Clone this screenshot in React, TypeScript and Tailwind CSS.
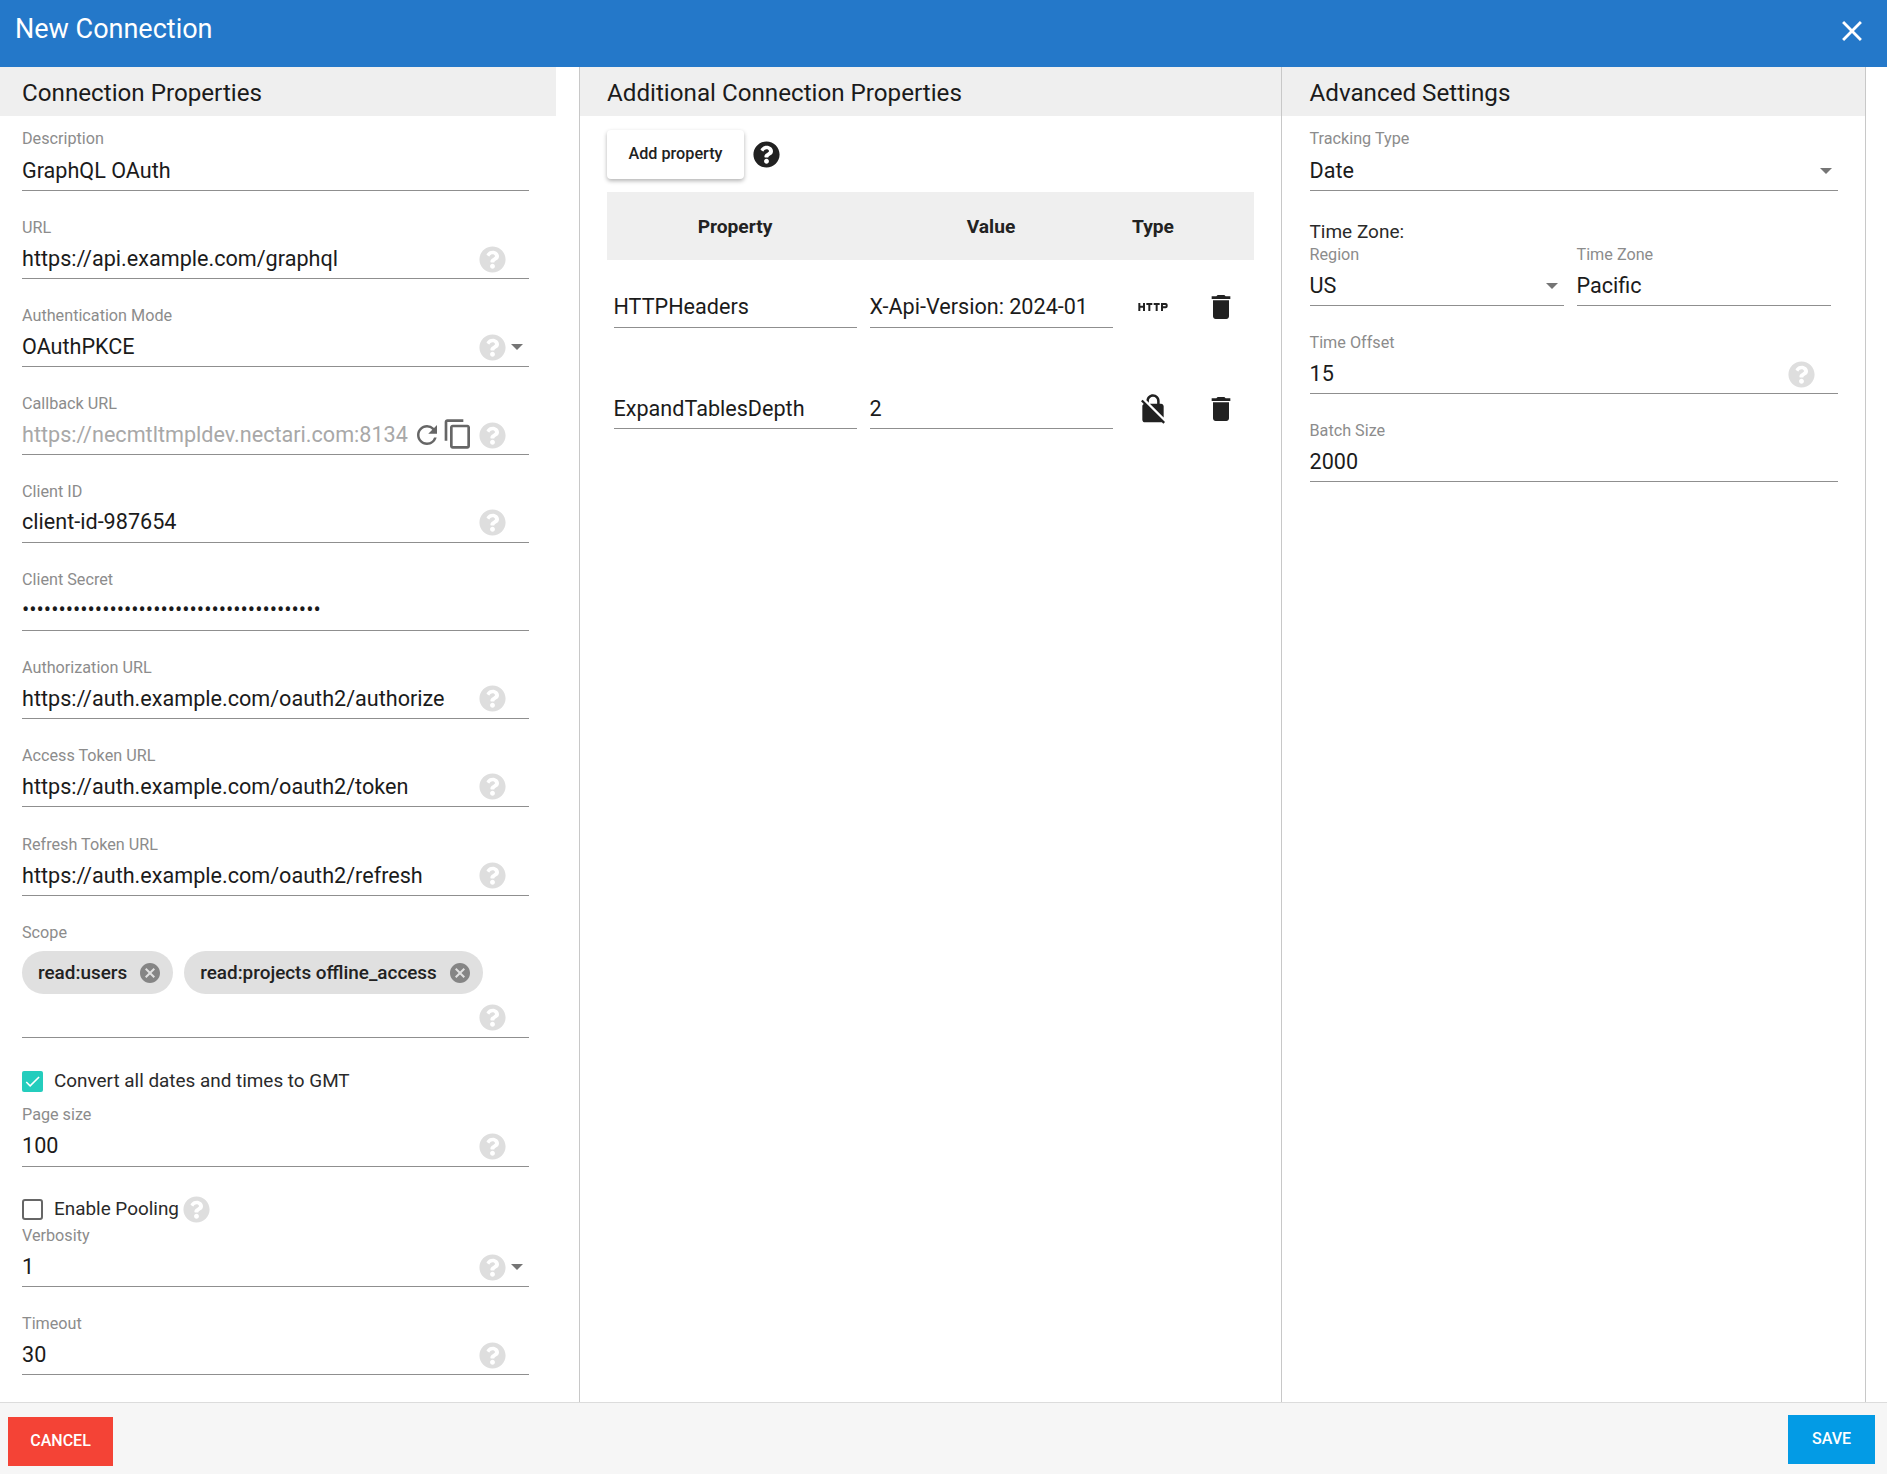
import React from "react";
import { FaQuestionCircle } from "react-icons/fa";
import {
  MdCancel,
  MdCheck,
  MdClose,
  MdContentCopy,
  MdDelete,
  MdHttp,
  MdNoEncryption,
  MdRefresh,
} from "react-icons/md";

function Help({ className = "text-[#dedede]" }: { className?: string }) {
  return <FaQuestionCircle size={27} className={`shrink-0 ${className}`} />;
}

function Caret({ className = "" }: { className?: string }) {
  return (
    <svg width="12" height="6" viewBox="0 0 12 6" className={`shrink-0 ${className}`}>
      <path d="M0 0h12L6 6z" fill="#757575" />
    </svg>
  );
}

function PanelTitle({ children }: { children: React.ReactNode }) {
  return (
    <div className="h-[49px] pt-[3px] bg-[#efefef] flex items-center text-[24.2px] text-[#1b1b1b]">
      {children}
    </div>
  );
}

// label on top, value on an underlined row
function Field({
  label,
  value,
  help,
  caret,
  tight,
  className = "",
  valueClass = "text-[#1b1b1b]",
  children,
}: {
  label: string;
  value?: string;
  help?: boolean;
  caret?: boolean;
  tight?: boolean;
  className?: string;
  valueClass?: string;
  children?: React.ReactNode;
}) {
  return (
    <div className={`h-[64px] flex flex-col ${className}`}>
      <div className={`h-[22px] text-[16.2px] text-[#8c8c8c] ${tight ? "leading-[24px]" : "leading-[26px]"}`}>
        {label}
      </div>
      <div className="h-[42px] pt-[3px] flex items-center border-b border-[#8f8f8f] relative">
        <span className={`flex-1 truncate text-[21.6px] ${valueClass}`}>{value}</span>
        {children}
        {help && (
          <span className={caret ? "ml-0" : "mr-[23px]"}>
            <Help />
          </span>
        )}
        {caret && <Caret className={help ? "ml-[5px] mr-[6px]" : "mr-[6px]"} />}
      </div>
    </div>
  );
}

function Chip({ text }: { text: string }) {
  return (
    <div className="h-[43px] rounded-full bg-[#e0e0e0] flex items-center pl-4 pr-[11px] gap-[11px]">
      <span className="text-[18.9px] font-medium text-[#222] pt-[1px]">{text}</span>
      <MdCancel size={24} className="text-[#858585]" />
    </div>
  );
}

function Check({ checked, label }: { checked?: boolean; label: string }) {
  return (
    <>
      {checked ? (
        <span className="w-[21px] h-[21px] rounded-[2px] bg-[#24cdbd] flex items-center justify-center">
          <MdCheck size={19} className="text-white" />
        </span>
      ) : (
        <span className="w-[21px] h-[21px] rounded-[3px] border-2 border-[#666] bg-white" />
      )}
      <span className="ml-[11px] text-[18.9px] text-[#2a2a2a]">{label}</span>
    </>
  );
}

function PropRow({
  name,
  value,
  icon,
  low,
  className,
}: {
  name: string;
  value: string;
  icon: React.ReactNode;
  low?: boolean;
  className: string;
}) {
  const cell = `h-[42px] flex items-center border-b border-[#8f8f8f] text-[21.6px] text-[#1b1b1b] ${
    low ? "pt-[3px]" : "pt-[1px]"
  }`;
  const iconCell = `flex items-center justify-center ${low ? "pt-[2px]" : ""}`;
  return (
    <div className={`grid grid-cols-[256px_256px_68px_67px] h-[42px] ${className}`}>
      <div className="px-[6.5px]">
        <div className={cell}>{name}</div>
      </div>
      <div className="px-[6.5px]">
        <div className={cell}>{value}</div>
      </div>
      <div className={iconCell}>{icon}</div>
      <div className={iconCell}>
        <MdDelete size={32} className="text-[#212121]" />
      </div>
    </div>
  );
}

export default function App() {
  return (
    <div className="w-[1887px] h-[1474px] flex flex-col bg-white overflow-hidden font-['Roboto',sans-serif]">
      <header className="h-[67px] shrink-0 bg-[#2478c9] flex items-start justify-between pl-[15px] pr-[18px] text-white">
        <div className="text-[27px] leading-[58px]">New Connection</div>
        <MdClose size={34} className="mt-[14px]" />
      </header>

      <div className="flex-1 flex min-h-0">
        {/* Connection Properties */}
        <section className="w-[580px] shrink-0 border-r border-[#c8c8c8]">
          <div className="w-[556px]">
            <PanelTitle>
              <span className="pl-[22px]">Connection Properties</span>
            </PanelTitle>
          </div>
          <div className="pl-[22px] w-[529px] pt-[11px]">
            <Field tight label="Description" value="GraphQL OAuth" />
            <Field className="mt-[24px]" label="URL" value="https://api.example.com/graphql" help />
            <Field className="mt-[24px]" label="Authentication Mode" value="OAuthPKCE" help caret />
            <Field
              className="mt-[24px]"
              label="Callback URL"
              value="https://necmtltmpldev.nectari.com:8134"
              valueClass="text-[#a8a8a8]"
              help
            >
              <MdRefresh size={30} className="text-[#666] shrink-0" />
              <MdContentCopy size={32} className="text-[#666] shrink-0 mr-[5px] mb-[2px]" />
            </Field>
            <Field className="mt-[23.5px]" label="Client ID" value="client-id-987654" help />
            <Field className="mt-[24px]" label="Client Secret" value={"•".repeat(41)} />
            <Field
              className="mt-[24px]"
              label="Authorization URL"
              value="https://auth.example.com/oauth2/authorize"
              valueClass="text-[#1b1b1b] pt-[2px]"
              help
            />
            <Field
              className="mt-[24px]"
              label="Access Token URL"
              value="https://auth.example.com/oauth2/token"
              valueClass="text-[#1b1b1b] pt-[2px]"
              help
            />
            <Field
              className="mt-[25px]"
              label="Refresh Token URL"
              value="https://auth.example.com/oauth2/refresh"
              valueClass="text-[#1b1b1b] pt-[2px]"
              help
            />
            <div className="mt-[25.5px] h-[117px] border-b border-[#8f8f8f]">
              <div className="h-[22px] leading-[24px] text-[16.2px] text-[#8c8c8c]">Scope</div>
              <div className="mt-2 flex gap-[11px]">
                <Chip text="read:users" />
                <Chip text="read:projects offline_access" />
              </div>
              <div className="mt-[10px] flex justify-end pr-[23px]">
                <Help />
              </div>
            </div>
            <div className="mt-[33px] h-[21px] flex items-center">
              <Check checked label="Convert all dates and times to GMT" />
            </div>
            <Field tight className="mt-[10.5px]" label="Page size" value="100" help />
            <div className="mt-[32.5px] h-[21px] flex items-center">
              <Check label="Enable Pooling" />
              <Help className="text-[#dedede] ml-[4px]" />
            </div>
            <Field className="mt-[3px]" label="Verbosity" value="1" help caret />
            <Field className="mt-[24px]" label="Timeout" value="30" help />
          </div>
        </section>

        {/* Additional Connection Properties */}
        <section className="w-[702px] shrink-0 border-r border-[#c8c8c8]">
          <PanelTitle>
            <span className="pl-[27px]">Additional Connection Properties</span>
          </PanelTitle>
          <div className="pl-[27px] pt-[14px]">
            <div className="flex items-center gap-[9px]">
              <button className="w-[137px] h-[49px] rounded-[4px] bg-white shadow-[0_2px_4px_rgba(0,0,0,0.3)] text-[16.2px] font-medium text-[#222]">
                Add property
              </button>
              <Help className="text-[#212121]" />
            </div>
            <div className="mt-[13px] w-[647px] h-[68px] pt-[3px] bg-[#efefef] grid grid-cols-[256px_256px_68px_67px] items-center text-center text-[19.2px] font-bold text-[#222]">
              <div>Property</div>
              <div>Value</div>
              <div>Type</div>
            </div>
            <PropRow
              className="mt-[26px]"
              name="HTTPHeaders"
              value="X-Api-Version: 2024-01"
              icon={<MdHttp size={32} className="text-[#212121]" />}
            />
            <PropRow
              low
              className="mt-[59px]"
              name="ExpandTablesDepth"
              value="2"
              icon={<MdNoEncryption size={32} className="text-[#212121]" />}
            />
          </div>
        </section>

        {/* Advanced Settings */}
        <section className="w-[584px] shrink-0 border-r border-[#c8c8c8]">
          <PanelTitle>
            <span className="pl-[27.5px]">Advanced Settings</span>
          </PanelTitle>
          <div className="pl-[27.5px] w-[556px] pt-[11px]">
            <Field tight label="Tracking Type" value="Date" caret />
            <div className="mt-[29px] h-[22px] leading-[24px] text-[19px] text-[#2a2a2a]">Time Zone:</div>
            <div className="flex gap-[13px]">
              <Field className="w-[254px]" label="Region" value="US" caret />
              <Field className="w-[254px]" label="Time Zone" value="Pacific" />
            </div>
            <Field className="mt-[24px]" label="Time Offset" value="15" help />
            <Field className="mt-[24px]" label="Batch Size" value="2000" />
          </div>
        </section>
      </div>

      <footer className="h-[72px] shrink-0 border-t border-[#dcdcdc] bg-[#f6f6f6] flex items-start justify-between pl-2 pr-3">
        <button className="mt-[14px] w-[105px] h-[49px] pb-[2px] bg-[#f44336] text-white text-[16px] font-medium">
          CANCEL
        </button>
        <button className="mt-[12px] w-[87px] h-[49px] pb-[2px] bg-[#039be5] text-white text-[16px] font-medium">
          SAVE
        </button>
      </footer>
    </div>
  );
}
